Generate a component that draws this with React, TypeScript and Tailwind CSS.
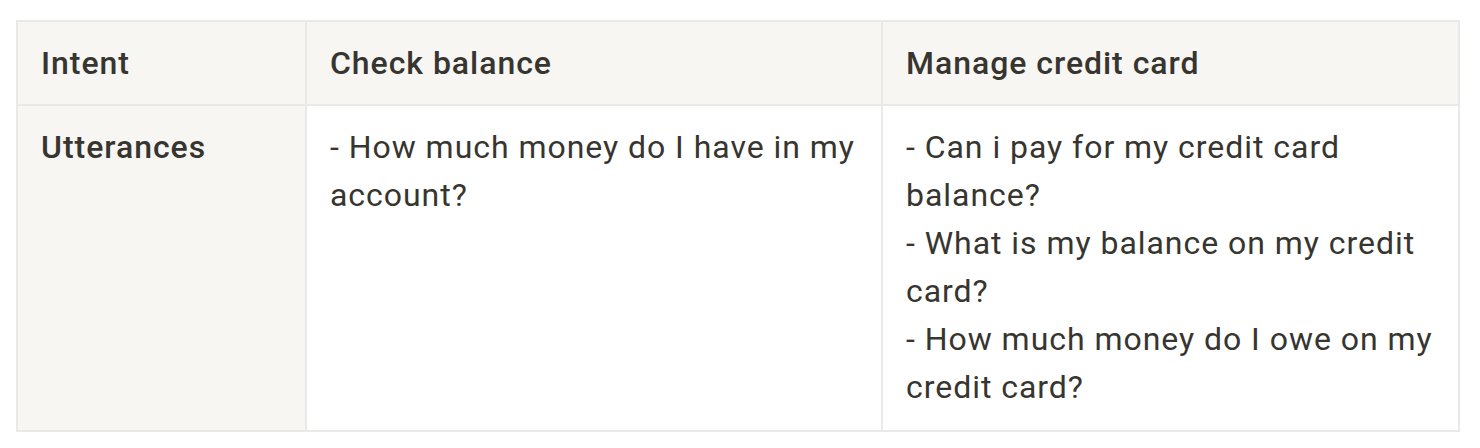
export default function App() {
  const rows = {
    intents: ['Check balance', 'Manage credit card'],
    utterances: [
      ['- How much money do I have in my account?'],
      [
        '- Can i pay for my credit card balance?',
        '- What is my balance on my credit card?',
        '- How much money do I owe on my credit card?',
      ],
    ],
  };

  return (
    <div
      className="w-[1480px] h-[448px] bg-white pt-[20px] pl-[16px]"
      style={{ fontFamily: 'Roboto, "Noto Sans", sans-serif' }}
    >
      <table className="border-collapse border-2 border-[#e9e9e7] text-[#37352f] text-[32px] leading-[48px] tracking-[0.03em] table-fixed w-[1442px]">
        <colgroup>
          <col className="w-[289px]" />
          <col className="w-[576px]" />
          <col className="w-[577px]" />
        </colgroup>
        <tbody>
          {/* Header row */}
          <tr className="bg-[#f7f6f3] h-[84px]">
            <td className="border-2 border-[#e9e9e7] px-[23px] py-[17px] align-top font-medium">Intent</td>
            {rows.intents.map((name) => (
              <td key={name} className="border-2 border-[#e9e9e7] px-[23px] py-[17px] align-top font-medium">
                {name}
              </td>
            ))}
          </tr>

          {/* Utterances row */}
          <tr className="h-[326px]">
            <td className="bg-[#f7f6f3] border-2 border-[#e9e9e7] px-[23px] py-[17px] align-top font-medium">
              Utterances
            </td>
            {rows.utterances.map((lines, i) => (
              <td key={i} className="border-2 border-[#e9e9e7] px-[23px] py-[17px] align-top">
                {lines.map((l) => (
                  <div key={l}>{l}</div>
                ))}
              </td>
            ))}
          </tr>
        </tbody>
      </table>
    </div>
  );
}
